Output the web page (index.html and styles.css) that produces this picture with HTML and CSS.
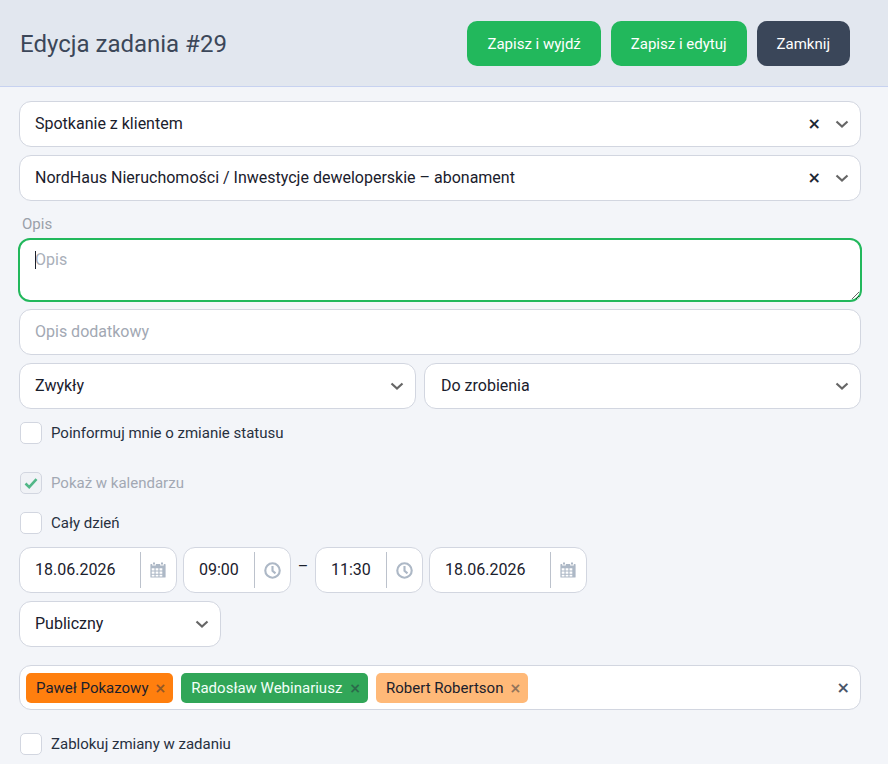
FILE: index.html
```html
<!DOCTYPE html>
<html lang="pl">

<head>
    <meta charset="UTF-8">
    <title>Edycja zadania #29</title>
    <link rel="stylesheet" href="styles.css">
</head>

<body>
    <header class="page-header">
        <h1>Edycja zadania #29</h1>
        <div class="header-actions">
            <button class="btn btn-green btn-first">Zapisz i wyjdź</button>
            <button class="btn btn-green">Zapisz i edytuj</button>
            <button class="btn btn-dark">Zamknij</button>
        </div>
    </header>

    <main class="task-form">
        <div class="field select-field row-first">
            <span class="field-value">Spotkanie z klientem</span>
            <span class="clear-x">&times;</span>
            <svg class="chevron" viewBox="0 0 14 8"><path d="M1.5 1.500l5.500 5 5.500-5"/></svg>
        </div>
        <div class="field select-field row-second">
            <span class="field-value">NordHaus Nieruchomości / Inwestycje deweloperskie – abonament</span>
            <span class="clear-x">&times;</span>
            <svg class="chevron" viewBox="0 0 14 8"><path d="M1.5 1.500l5.500 5 5.500-5"/></svg>
        </div>

        <label class="field-label">Opis</label>
        <div class="textarea-wrap">
            <textarea class="description" placeholder="Opis"></textarea>
            <span class="caret"></span>
        </div>

        <div class="field row-extra"><span class="placeholder">Opis dodatkowy</span></div>

        <div class="select-row">
            <div class="field select-field priority">
                <span class="field-value">Zwykły</span>
                <svg class="chevron" viewBox="0 0 14 8"><path d="M1.5 1.500l5.500 5 5.500-5"/></svg>
            </div>
            <div class="field select-field status">
                <span class="field-value">Do zrobienia</span>
                <svg class="chevron" viewBox="0 0 14 8"><path d="M1.5 1.500l5.500 5 5.500-5"/></svg>
            </div>
        </div>

        <div class="check-row notify">
            <span class="checkbox"></span>
            <span>Poinformuj mnie o zmianie statusu</span>
        </div>

        <div class="check-row calendar disabled">
            <span class="checkbox">
                <svg viewBox="0 0 14 12"><path d="M1.5 6.500l3.700 3.600 7.300-8"/></svg>
            </span>
            <span>Pokaż w kalendarzu</span>
        </div>

        <div class="check-row all-day">
            <span class="checkbox"></span>
            <span>Cały dzień</span>
        </div>

        <div class="datetime-row">
            <div class="field addon-field date-field">
                <span class="addon-value">18.06.2026</span>
                <span class="addon-icon">
                    <svg class="icon-calendar" viewBox="0 0 16 16"><path d="M3 0.5h2v2h-2zM11 0.5h2v2h-2z"/><path fill-rule="evenodd" d="M1 2h1.200v1.600h3.600V2h4.400v1.600h3.600V2H15a.6.6 0 0 1 .6.6v12.400a.6.6 0 0 1-.6.6H1a.6.6 0 0 1-.6-.6V2.600A.6.6 0 0 1 1 2zM1.700 6.200v2.200h2.800V6.200zm3.900 0v2.200h2.800V6.200zm3.900 0v2.200h2.800V6.200zM1.700 9.500v2.200h2.800V9.500zm3.900 0v2.200h2.800V9.500zm3.900 0v2.200h2.800V9.500zM1.700 12.800v1.600h2.800v-1.600zm3.900 0v1.600h2.800v-1.600zm3.900 0v1.600h2.800v-1.600z"/></svg>
                </span>
            </div>
            <div class="field addon-field time-field">
                <span class="addon-value">09:00</span>
                <span class="addon-icon">
                    <svg class="icon-clock" viewBox="0 0 16 16"><circle cx="8" cy="8" r="6.800"/><path d="M8 3.800V8.300l2.800 2.400"/></svg>
                </span>
            </div>
            <span class="dash">–</span>
            <div class="field addon-field time-field">
                <span class="addon-value">11:30</span>
                <span class="addon-icon">
                    <svg class="icon-clock" viewBox="0 0 16 16"><circle cx="8" cy="8" r="6.800"/><path d="M8 3.800V8.300l2.800 2.400"/></svg>
                </span>
            </div>
            <div class="field addon-field date-field">
                <span class="addon-value">18.06.2026</span>
                <span class="addon-icon">
                    <svg class="icon-calendar" viewBox="0 0 16 16"><path d="M3 0.5h2v2h-2zM11 0.5h2v2h-2z"/><path fill-rule="evenodd" d="M1 2h1.200v1.600h3.600V2h4.400v1.600h3.600V2H15a.6.6 0 0 1 .6.6v12.400a.6.6 0 0 1-.6.6H1a.6.6 0 0 1-.6-.6V2.600A.6.6 0 0 1 1 2zM1.700 6.200v2.200h2.800V6.200zm3.900 0v2.200h2.800V6.200zm3.900 0v2.200h2.800V6.200zM1.700 9.500v2.200h2.800V9.500zm3.900 0v2.200h2.800V9.500zm3.900 0v2.200h2.800V9.500zM1.700 12.800v1.600h2.800v-1.600zm3.900 0v1.600h2.800v-1.600zm3.900 0v1.600h2.800v-1.600z"/></svg>
                </span>
            </div>
        </div>

        <div class="field select-field visibility">
            <span class="field-value">Publiczny</span>
            <svg class="chevron" viewBox="0 0 14 8"><path d="M1.5 1.500l5.500 5 5.500-5"/></svg>
        </div>

        <div class="field tags-field">
            <span class="tag tag-orange">Paweł Pokazowy <b class="tag-x">&times;</b></span>
            <span class="tag tag-green">Radosław Webinariusz <b class="tag-x">&times;</b></span>
            <span class="tag tag-peach">Robert Robertson <b class="tag-x">&times;</b></span>
            <span class="tags-clear">&times;</span>
        </div>

        <div class="check-row lock">
            <span class="checkbox"></span>
            <span>Zablokuj zmiany w zadaniu</span>
        </div>
    </main>
</body>

</html>
```

FILE: styles.css
```css
html,
body {
    height: 100%;
    overflow: hidden;
}

body {
    font-family: Roboto, Arial, sans-serif;
    font-size: 16px;
    background: #f3f5f9;
    margin: 0;
    color: #1a202c;
}

.page-header {
    display: flex;
    align-items: center;
    justify-content: space-between;
    box-sizing: border-box;
    height: 87px;
    padding: 1px 38px 0 20px;
    background: #e2e7ef;
    border-bottom: 1px solid #c7d2f0;
}

.page-header h1 {
    margin: 0;
    font-size: 24px;
    font-weight: 400;
    color: #3c4759;
}

.header-actions {
    display: flex;
    gap: 10px;
}

.btn {
    height: 45px;
    padding: 0 20px;
    border: none;
    border-radius: 10px;
    font-family: inherit;
    font-size: 15px;
    font-weight: 400;
    color: #fff;
}

.btn-green {
    background: #22b85c;
}

.btn-dark {
    background: #3a4659;
}

.task-form {
    width: 842px;
    margin-left: 19px;
}

.field {
    display: flex;
    align-items: center;
    box-sizing: border-box;
    height: 46px;
    padding: 0 15px 2px;
    background: #fff;
    border: 1px solid #d2d6e0;
    border-radius: 12px;
}

.field-value {
    flex: 1;
}

.row-first {
    margin-top: 14px;
}

.row-second {
    margin-top: 8px;
}

.clear-x {
    font-family: "DejaVu Sans", sans-serif;
    font-weight: 700;
    font-size: 16px;
    line-height: 1;
    color: #1f2733;
    margin: 2px 14px 0 0;
}

.chevron {
    width: 14px;
    height: 8px;
    flex: none;
    margin: 2px 0 0;
    fill: none;
    stroke: #666;
    stroke-width: 2.2;
}

.select-field {
    padding-right: 11px;
}

.field-label {
    display: block;
    margin: 15px 0 0 3px;
    height: 22px;
    line-height: 16px;
    font-size: 15px;
    color: #9aa0a9;
}

.textarea-wrap {
    position: relative;
    height: 64px;
    margin: 0 -1px;
}

.description {
    display: block;
    box-sizing: border-box;
    width: 100%;
    height: 64px;
    padding: 10px 15px;
    border: 2px solid #22b85c;
    border-radius: 12px;
    font-family: inherit;
    font-size: 16px;
    background: #fff;
    outline: none;
}

.description::placeholder {
    color: #a9afb9;
    opacity: 1;
}

.caret {
    position: absolute;
    left: 17px;
    top: 13px;
    width: 1px;
    height: 18px;
    background: #1a202c;
}

.row-extra {
    margin-top: 7px;
}

.placeholder {
    color: #a2a8b3;
}

.select-row {
    display: flex;
    gap: 8px;
    margin-top: 8px;
}

.priority {
    width: 397px;
}

.status {
    flex: 1;
}

.status .field-value {
    padding-left: 1px;
}

.check-row {
    display: flex;
    align-items: center;
    gap: 9px;
    height: 22px;
    margin-left: 1px;
    font-size: 15px;
    color: #27303f;
}

.checkbox {
    display: flex;
    align-items: center;
    justify-content: center;
    box-sizing: border-box;
    width: 22px;
    height: 22px;
    background: #fff;
    border: 1px solid #d2d6e0;
    border-radius: 5px;
}

.checkbox svg {
    width: 14px;
    height: 12px;
    fill: none;
    stroke: #52b788;
    stroke-width: 2.6;
}

.notify {
    margin-top: 13px;
}

.calendar {
    margin-top: 28px;
}

.disabled {
    color: #a2a8b3;
}

.disabled .checkbox {
    background: #f0f2f6;
}

.all-day {
    margin-top: 18px;
}

.datetime-row {
    display: flex;
    align-items: center;
    gap: 6px;
    margin-top: 13px;
}

.addon-field {
    padding: 0;
}

.addon-value {
    flex: 1;
    padding: 0 0 2px 15px;
}

.date-field {
    width: 158px;
}

.time-field {
    width: 108px;
}

.addon-icon {
    display: flex;
    align-items: center;
    justify-content: center;
    flex: none;
    width: 34px;
    height: 36px;
    padding-right: 1px;
    border-left: 1px solid #bcc2cc;
}

.icon-calendar {
    width: 16px;
    height: 16px;
    fill: #adb8c6;
}

.icon-clock {
    width: 17px;
    height: 17px;
    fill: none;
    stroke: #adb8c6;
    stroke-width: 2;
}

.dash {
    width: 12px;
    margin-bottom: 8px;
    text-align: center;
}

.visibility {
    width: 202px;
    margin-top: 8px;
}

.tags-field {
    height: 45px;
    margin-top: 18px;
    padding: 0 10px 0 6px;
    gap: 8px;
}

.tag {
    display: flex;
    align-items: center;
    gap: 6px;
    box-sizing: border-box;
    height: 30px;
    padding: 0 7px 0 10px;
    border-radius: 5px;
    font-size: 15px;
    font-weight: 400;
    color: #1a202c;
}

.tag-orange {
    background: #ff7f0e;
}

.tag-green {
    gap: 7px;
    background: #31a658;
    color: #f2fff8;
}

.tag-peach {
    background: #ffb978;
}

.tag-x {
    font-family: "DejaVu Sans", sans-serif;
    font-size: 14px;
    line-height: 1;
    opacity: 0.5;
    color: #27303f;
}

.tags-clear {
    margin-left: auto;
    font-family: "DejaVu Sans", sans-serif;
    font-weight: 700;
    font-size: 16px;
    line-height: 1;
    color: #4a5568;
}

.lock {
    margin-top: 23px;
}
```
